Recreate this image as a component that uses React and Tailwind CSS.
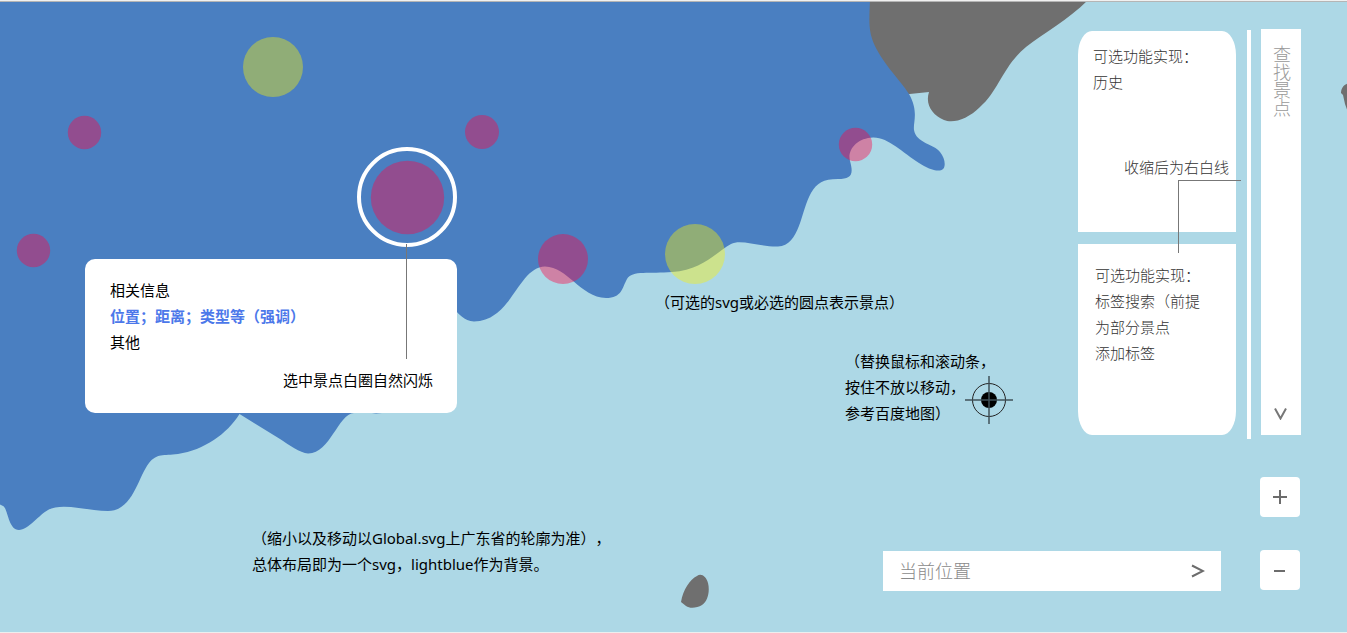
const pins = [
  { cx: 273, cy: 67, r: 30, fill: "#f9f208" },
  { cx: 695, cy: 254, r: 30, fill: "#f9f208" },
  { cx: 84.5, cy: 132.5, r: 16.7, fill: "#fe0244" },
  { cx: 33.5, cy: 250.5, r: 16.7, fill: "#fe0244" },
  { cx: 482, cy: 132, r: 17, fill: "#fe0244" },
  { cx: 855.5, cy: 144.5, r: 16.7, fill: "#fe0244" },
  { cx: 563, cy: 259, r: 25, fill: "#fe0244" },
  { cx: 407.5, cy: 197.5, r: 36.7, fill: "#fe0244" },
];

function MapDrawing() {
  return (
    <svg className="absolute inset-0 h-full w-full" aria-hidden="true">
      <path
        fill="#6f6f6f"
        d="M860 0 H1088 C1068 20 1044 33 1026 47 C1003 66 998 92 980 107 C968 119 953 124 944 120 C932 115 925 104 929 92 L900 95 L860 60 Z"
      />
      <path
        fill="#4a7fc1"
        d="M0 0 H870 C869 24 868 33 877 50 C887 68 900 80 909 94 C919 112 913 122 914 130 C916 143 934 144 940 152 C945 158 946 166 943 169 C939 173 928 169 919 163 C903 153 888 137 873 137.500 C857 138 847 150 850 161 C854 175 851 179 838 179 C823 179 817 183 811 193 C801 210 800 246 778 246.500 C760 247 741 239 731 244 C716 252 703 270 672 272 C650 274 632 270 627 279 C622 288 622 298 606 298 C580 297 568 267 545 266.500 C518 267 512 321 474 321.500 C464 321 458 313 456 311 L390 405 L382 413 C375 414 372 413 368 413 L354 413 C338 414 330 454 308 453.500 C300 453 289 445 280 439 L239.500 414 C227 434 204 450 178 454 C163 456 157 453 149 463 C138 477 133 511 108 511 C88 511 62 502 48 510 C40 514 28 530 19 530 C8 530 8 508 3 506 L0 504.500 Z"
      />
      <path
        fill="#6f6f6f"
        d="M681 602 C683 590 690 579 697 576 C701 573 706 576 708 583 C710 591 708 601 702 605 C697 608 690 609 686 606 Z M1350 83 C1344 84 1341 88 1341 93 L1343 95 L1345 104 L1350 118 Z"
      />
      {pins.map((pin) => (
        <circle key={`${pin.cx}-${pin.cy}`} {...pin} fillOpacity="0.4" />
      ))}
      <circle cx="407" cy="197" r="48" fill="none" stroke="#fff" strokeWidth="4" />
    </svg>
  );
}

function Crosshair() {
  return (
    <svg className="absolute top-[376px] left-[965px] h-12 w-12" viewBox="0 0 48 48" aria-hidden="true">
      <circle cx="24" cy="24" r="16.500" fill="none" stroke="#222" strokeWidth="1" />
      <circle cx="24" cy="24" r="8" fill="#000" />
      <path d="M24 0V48M0 24H48" stroke="#40515a" strokeWidth="1.500" fill="none" />
    </svg>
  );
}

function InfoCard() {
  return (
    <article className="absolute top-[259px] left-[85px] flex w-[372px] flex-col rounded-[10px] bg-white pt-[18px] pr-6 pb-5 pl-[25px]">
      <h2>相关信息</h2>
      <p className="font-bold text-[#4c78ea]">位置；距离；类型等（强调）</p>
      <p>其他</p>
      <p className="mt-3 text-right">选中景点白圈自然闪烁</p>
      <span className="absolute -top-[15px] left-[321px] h-[115px] w-px bg-[#777]" />
    </article>
  );
}

export default function App() {
  return (
    <main
      lang="zh-CN"
      className="relative flex min-h-screen flex-col overflow-hidden border-b border-[#eee] bg-[#add8e6] font-['Noto_Sans','Noto_Sans_CJK_SC',sans-serif] text-[15px] leading-[26px] text-black [text-spacing-trim:space-all]"
    >
      <MapDrawing />
      <div className="absolute inset-x-0 top-0 h-[2px] border-b border-[#b5b5b5] bg-[#f0f0f0]" />

      <InfoCard />
      <p className="absolute top-[289px] left-[655px] whitespace-nowrap">（可选的svg或必选的圆点表示景点）</p>
      <p className="absolute top-[348px] left-[845px] whitespace-nowrap">
        （替换鼠标和滚动条，
        <br />
        按住不放以移动，
        <br />
        参考百度地图）
      </p>
      <Crosshair />
      <p className="absolute top-[525px] left-[252px] whitespace-nowrap">
        （缩小以及移动以Global.svg上广东省的轮廓为准），
        <br />
        总体布局即为一个svg，lightblue作为背景。
      </p>

      <div className="relative ml-auto flex flex-col items-end pt-[29px] pr-[46px] font-light">
        <div className="flex items-start">
          <div className="flex w-[158px] flex-col gap-3 pt-[2px] text-[#333]">
            <section className="relative flex h-[201px] flex-col rounded-t-[14px_24px] bg-white px-[15px] pt-3">
              <p>
                可选功能实现：
                <br />
                历史
              </p>
              <p className="-mr-2 mt-[59px] self-end whitespace-nowrap">收缩后为右白线</p>
              <span className="absolute top-[149px] left-[100px] h-[73px] w-[63px] border-t border-l border-[#777]" />
            </section>
            <section className="h-[191px] rounded-b-[14px_24px] bg-white px-[17px] pt-[18px]">
              <p>
                可选功能实现：
                <br />
                标签搜索（前提
                <br />
                为部分景点
                <br />
                添加标签
              </p>
            </section>
          </div>
          <div className="mt-px ml-[11px] h-[409px] w-1 bg-white" />
          <form className="ml-[10px] flex h-[406px] w-10 flex-col items-center bg-white pt-4 pb-[13px]">
            <input
              aria-label="查找景点"
              placeholder="查找景点"
              className="min-h-0 w-6 flex-1 bg-transparent text-[18px] leading-6 outline-none [writing-mode:vertical-rl] placeholder:text-[#999]"
            />
            <button type="button" aria-label="展开" className="flex h-4 w-10 items-center justify-center">
              <svg className="h-3 w-3.5" viewBox="0 0 14 12" fill="none" stroke="#777" strokeWidth="2">
                <path d="M1 0.500 L6.500 10.500 L12 0.500" />
              </svg>
            </button>
          </form>
        </div>
        <button
          type="button"
          aria-label="放大"
          className="mt-[38px] mr-px flex h-10 w-10 items-center justify-center rounded bg-white"
        >
          <svg className="h-3.5 w-3.5" viewBox="0 0 14 14" stroke="#6c6c6c" strokeWidth="2">
            <path d="M7 0V14M0 7H14" />
          </svg>
        </button>
        <div className="mt-[33px] mr-px flex h-[41px] gap-[39px]">
          <form className="flex h-10 w-[338px] items-center self-end bg-white pr-4 pl-4">
            <input
              aria-label="当前位置"
              placeholder="当前位置"
              className="h-10 min-w-0 flex-1 bg-transparent text-[18px] outline-none placeholder:text-[#8a8a8a]"
            />
            <button type="button" aria-label="定位" className="flex h-10 w-4 items-center justify-end">
              <svg className="h-3.5 w-3.5" viewBox="0 0 14 14" fill="none" stroke="#6c6c6c" strokeWidth="2">
                <path d="M1 1.500 L12 7 L1 12.500" />
              </svg>
            </button>
          </form>
          <button
            type="button"
            aria-label="缩小"
            className="flex h-10 w-10 items-center justify-center rounded bg-white"
          >
            <svg className="h-3.5 w-3.5" viewBox="0 0 14 14" stroke="#6c6c6c" strokeWidth="2">
              <path d="M1 8H12" />
            </svg>
          </button>
        </div>
      </div>
    </main>
  );
}
